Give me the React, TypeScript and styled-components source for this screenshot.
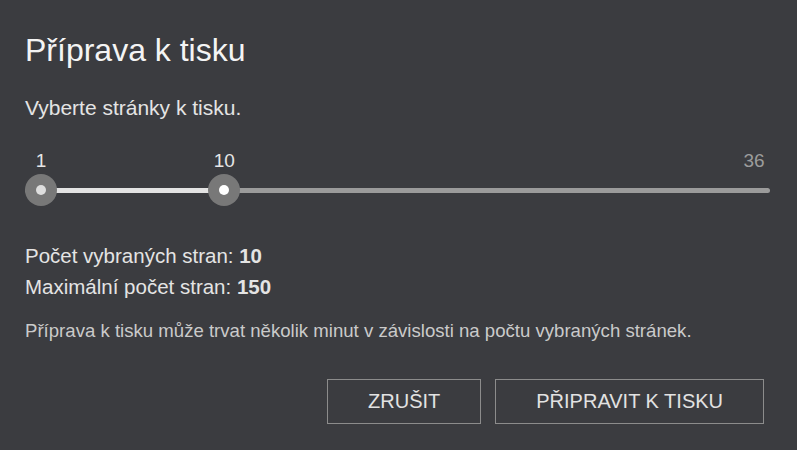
import React, { useState } from 'react';
import styled, { createGlobalStyle } from 'styled-components';

const GlobalStyle = createGlobalStyle`
  html, body {
    margin: 0;
    padding: 0;
    background: #3b3c40;
  }
  body {
    font-family: "Liberation Sans", Arial, sans-serif;
  }
`;

const Dialog = styled.div`
  width: 797px;
  height: 450px;
  box-sizing: border-box;
  padding: 30px 25px 0 25px;
  background: #3b3c40;
  display: flex;
  flex-direction: column;
  color: #e4e4e4;
`;

const Title = styled.h1`
  margin: 0;
  font-size: 32px;
  line-height: 40px;
  font-weight: 400;
  color: #f4f4f4;
`;

const Text = styled.p`
  margin: 23px 0 0;
  font-size: 21px;
  line-height: 30px;
`;

const SliderBox = styled.div`
  margin-top: 26px;
  display: flex;
  flex-direction: column;
`;

const LabelRow = styled.div`
  position: relative;
  height: 24px;
`;

const Label = styled.span<{ $muted?: boolean }>`
  position: absolute;
  top: 0;
  transform: translateX(-50%);
  font-size: 19px;
  line-height: 24px;
  color: ${(p) => (p.$muted ? '#9c9c9c' : '#e6e6e6')};
`;

const TrackArea = styled.div`
  position: relative;
  height: 34px;
  display: flex;
  align-items: center;
  margin-right: 2px;
`;

const Rail = styled.div`
  flex: 1;
  height: 5px;
  border-radius: 3px;
  background: #9b9b9b;
`;

const Range = styled.div`
  position: absolute;
  top: 50%;
  height: 5px;
  margin-top: -2.5px;
  background: #e3e3e3;
`;

const Thumb = styled.div<{ $active?: boolean }>`
  position: absolute;
  top: 50%;
  width: 32px;
  height: 32px;
  margin: -16px 0 0 -16px;
  border-radius: 50%;
  background: #787878;
  display: flex;
  align-items: center;
  justify-content: center;
  cursor: pointer;

  &::after {
    content: '';
    width: 10px;
    height: 10px;
    border-radius: 50%;
    background: ${(p) => (p.$active ? '#ffffff' : '#dedede')};
  }
`;

const Stats = styled.div`
  margin-top: 33px;
  font-size: 20.5px;
  line-height: 31px;
`;

const Note = styled.p`
  margin: 16px 0 0;
  font-size: 18.6px;
  line-height: 26px;
  color: #cacaca;
`;

const Actions = styled.div`
  margin-top: 35px;
  margin-right: 8px;
  display: flex;
  justify-content: flex-end;
  gap: 14px;
`;

const Button = styled.button`
  height: 45px;
  padding: 0 40px;
  box-sizing: border-box;
  background: transparent;
  border: 1px solid #8c8c8c;
  color: #e2e2e2;
  font-family: "Liberation Sans", Arial, sans-serif;
  font-size: 20px;
  text-transform: uppercase;
  cursor: pointer;
`;

const MIN = 1;
const MAX = 36;
const WIDTH = 745;
const INSET = 16;

const pos = (v: number) => INSET + ((v - MIN) / (MAX - MIN)) * (WIDTH - INSET * 2);

export default function App() {
  const [from] = useState(1);
  const [to] = useState(10);

  return (
    <>
      <GlobalStyle />
      <Dialog>
        <Title>Příprava k tisku</Title>
        <Text>Vyberte stránky k tisku.</Text>
        <SliderBox>
          <LabelRow>
            <Label style={{ left: pos(from) }}>{from}</Label>
            <Label style={{ left: pos(to) }}>{to}</Label>
            <Label $muted style={{ left: pos(MAX) }}>
              {MAX}
            </Label>
          </LabelRow>
          <TrackArea>
            <Rail />
            <Range style={{ left: pos(from), width: pos(to) - pos(from) }} />
            <Thumb style={{ left: pos(from) }} />
            <Thumb $active style={{ left: pos(to) }} />
          </TrackArea>
        </SliderBox>
        <Stats>
          <div>
            Počet vybraných stran: <b>{to - from + 1}</b>
          </div>
          <div>
            Maximální počet stran: <b>150</b>
          </div>
        </Stats>
        <Note>Příprava k tisku může trvat několik minut v závislosti na počtu vybraných stránek.</Note>
        <Actions>
          <Button>Zrušit</Button>
          <Button>Připravit k tisku</Button>
        </Actions>
      </Dialog>
    </>
  );
}
